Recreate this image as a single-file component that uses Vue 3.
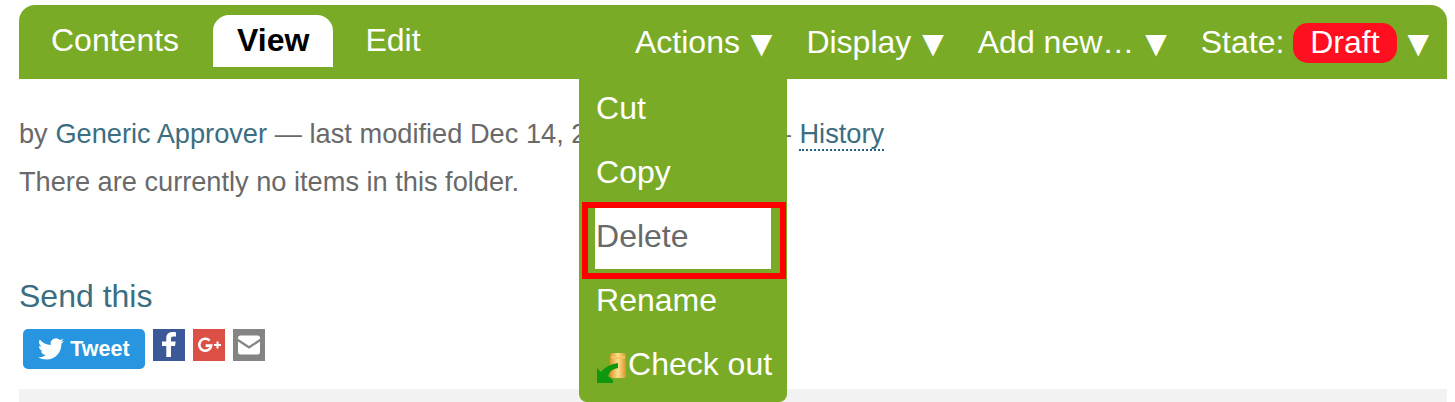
<script setup>
const tabs = [
  { label: 'Contents' },
  { label: 'View', selected: true },
  { label: 'Edit' }
]

const menuItems = ['Cut', 'Copy', 'Delete', 'Rename', 'Check out']
const plainMenus = ['Display', 'Add new…']
</script>

<template>
  <div class="page">
    <nav class="toolbar">
      <ul class="tabs">
        <li v-for="tab in tabs" :key="tab.label" class="tab" :class="{ selected: tab.selected }">{{ tab.label }}</li>
      </ul>
      <ul class="menus">
        <li class="menu actions">
          Actions <span class="caret">▼</span>
          <ul class="dropdown">
            <li v-for="item in menuItems" :key="item" class="item" :class="{ active: item === 'Delete' }">
              <svg v-if="item === 'Check out'" class="checkout" viewBox="0 0 32 32">
                <defs>
                  <linearGradient id="can" x1="0" x2="1" y1="0" y2="0">
                    <stop offset="0" stop-color="#d9962a" />
                    <stop offset="0.5" stop-color="#fde08c" />
                    <stop offset="1" stop-color="#d8932b" />
                  </linearGradient>
                </defs>
                <path fill="url(#can)" d="M14 3q1-2 3-2h10q3 0 3 2v21q0 2-3 2h-10q-3 0-3-2z" />
                <path fill="#f3c860" d="M15 4q6 2 14 0v2q-7 2-14 0z" />
                <path fill="#0f970f" d="M1 31V16l4 4q5-7 17-9v5q-8 1-10 8l5 4v3z" />
              </svg>
              <span>{{ item }}</span>
              <i v-if="item === 'Delete'" class="highlight"></i>
            </li>
          </ul>
        </li>
        <li v-for="menu in plainMenus" :key="menu" class="menu">{{ menu }} <span class="caret">▼</span></li>
        <li class="menu state">
          State: <span class="pill">Draft</span> <span class="caret">▼</span>
        </li>
      </ul>
    </nav>

    <main class="content">
      <p class="byline">
        by <a class="link">Generic Approver</a> — last modified Dec 14, 2017 04:39 PM — <a class="link history">History</a>
      </p>
      <p class="empty">There are currently no items in this folder.</p>

      <h2 class="send">Send this</h2>
      <div class="share">
        <span class="tweet">
          <svg viewBox="0 0 24 24" class="bird">
            <path fill="#fff" d="M23.95 4.57a10 10 0 0 1-2.82.77 4.96 4.96 0 0 0 2.16-2.72c-.95.55-2 .95-3.12 1.18a4.92 4.92 0 0 0-8.38 4.48C7.69 8.1 4.07 6.13 1.64 3.16a4.82 4.82 0 0 0-.66 2.47c0 1.71.87 3.21 2.19 4.1a4.9 4.9 0 0 1-2.23-.61v.06a4.92 4.92 0 0 0 3.95 4.83 5 5 0 0 1-2.21.08 4.94 4.94 0 0 0 4.6 3.42A9.87 9.87 0 0 1 0 19.54a14 14 0 0 0 7.56 2.21c9.05 0 14-7.5 14-13.98 0-.21 0-.42-.02-.63a9.94 9.94 0 0 0 2.41-2.57z" />
          </svg>
          Tweet
        </span>
        <span class="square fb">
          <svg viewBox="0 0 32 32"><path fill="#fff" d="M18 28V17h4l.7-4.6H18V9.7c0-1.400.5-2.200 2.300-2.200H23V3.300c-.6-.1-2-.3-3.700-.3-3.700 0-6 2.200-6 6.200v3.200H9V17h4.300v11z" /></svg>
        </span>
        <span class="square gplus">
          <svg viewBox="0 0 32 32">
            <path fill="none" stroke="#fff" stroke-width="2.600" d="M16.600 11.600a6 6 0 1 0 1.600 5h-5.600" />
            <path fill="none" stroke="#fff" stroke-width="2" d="M21 16h7M24.500 12.500v7" />
          </svg>
        </span>
        <span class="square mail">
          <svg viewBox="0 0 32 32">
            <path fill="#fff" d="M5 9q0-2.500 2.500-2.500h17Q27 6.500 27 9v.8L16 17 5 9.800z" />
            <path fill="#fff" d="M5 12.500 16 19.700l11-7.200V23q0 2.500-2.500 2.500h-17Q5 25.500 5 23z" />
          </svg>
        </span>
      </div>
      <div class="strip"></div>
    </main>
  </div>
</template>

<style>
html,
body {
  margin: 0;
  background: #fff;
  overflow: hidden;
}
</style>

<style scoped>
.page {
  box-sizing: border-box;
  height: 402px;
  padding: 5px 8px 0 19px;
  font-family: "Liberation Sans", Arial, sans-serif;
  color: #696969;
  overflow: hidden;
}

ul {
  list-style: none;
  margin: 0;
  padding: 0;
}

.toolbar {
  display: flex;
  justify-content: space-between;
  height: 74px;
  background: #7aab26;
  border-radius: 16px 16px 0 0;
  color: #fff;
}

.tabs {
  display: flex;
  gap: 9px;
  padding: 10px 0 0 8px;
}

.tab {
  height: 52px;
  padding: 0 24px;
  font-size: 32px;
  line-height: 51px;
  border-radius: 16px 16px 0 0;
}

.tab.selected {
  margin: 0 -1px 0 1px;
  background: #fff;
  color: #000;
  font-weight: 700;
}

.menus {
  display: flex;
  gap: 34px;
  padding: 17px 18px 0 0;
  font-size: 32px;
  line-height: 40px;
}

.menu {
  position: relative;
  white-space: nowrap;
}

.caret {
  margin-left: 2px;
  font-family: "DejaVu Sans", sans-serif;
  font-size: 28px;
  line-height: 40px;
}

.pill {
  display: inline-block;
  padding: 0 17px 1px;
  background: #ff0f20;
  border-radius: 15px;
  line-height: 39px;
}

.dropdown {
  position: absolute;
  top: 57px;
  left: -56px;
  width: 208px;
  height: 323px;
  box-sizing: border-box;
  padding: 1px 16px 0;
  background: #7aab26;
  border-radius: 0 0 8px 8px;
}

.item {
  position: relative;
  display: flex;
  align-items: flex-start;
  height: 61px;
  margin-bottom: 3px;
  padding-left: 1px;
  line-height: 56px;
}

.item.active {
  background: #fff;
  color: #696969;
}

.highlight {
  position: absolute;
  inset: -6px -15px -10px -13px;
  border: 6px solid #f00;
}

.checkout {
  width: 32px;
  height: 32px;
  margin-top: 16px;
  flex: none;
}

.content {
  font-size: 27.2px;
}

.byline {
  margin: 37px 0 0;
  line-height: 36px;
  white-space: nowrap;
  word-spacing: 0.1px;
}

.empty {
  margin: 12px 0 0;
  line-height: 36px;
}

.link {
  color: #3b6e80;
}

.history {
  margin-left: 1px;
  border-bottom: 2px dotted #2a5f85;
}

.send {
  margin: 76px 0 0;
  font-size: 32px;
  font-weight: 400;
  line-height: 40px;
  color: #3b6e80;
}

.share {
  display: flex;
  align-items: flex-start;
  gap: 8px;
  margin: 13px 0 0 4px;
}

.tweet {
  display: flex;
  align-items: center;
  justify-content: center;
  gap: 6px;
  width: 122px;
  height: 40px;
  background: #2795e0;
  border-radius: 5px;
  color: #fff;
  font-size: 21.5px;
  font-weight: 700;
}

.bird {
  width: 26px;
  height: 26px;
}

.square {
  width: 32px;
  height: 32px;
}

.square svg {
  display: block;
  width: 32px;
  height: 32px;
}

.fb {
  background: #3b5998;
}

.gplus {
  background: #db4f45;
}

.mail {
  background: #848484;
}

.strip {
  height: 14px;
  margin-top: 20px;
  background: #f2f2f2;
}
</style>
